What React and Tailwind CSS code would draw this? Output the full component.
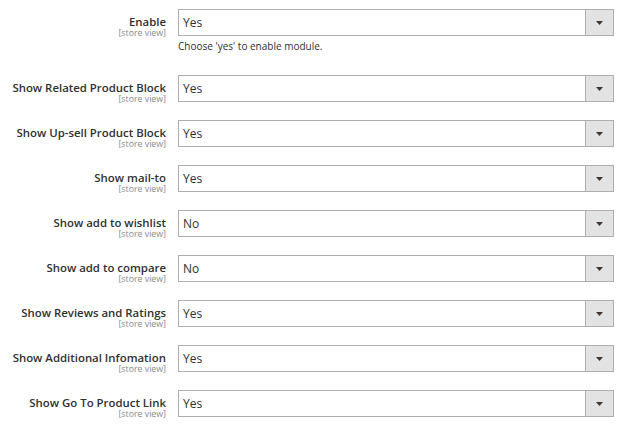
const rows = [
  { label: "Enable", value: "Yes", note: "Choose 'yes' to enable module." },
  { label: "Show Related Product Block", value: "Yes" },
  { label: "Show Up-sell Product Block", value: "Yes" },
  { label: "Show mail-to", value: "Yes" },
  { label: "Show add to wishlist", value: "No" },
  { label: "Show add to compare", value: "No" },
  { label: "Show Reviews and Ratings", value: "Yes" },
  { label: "Show Additional Infomation", value: "Yes" },
  { label: "Show Go To Product Link", value: "Yes" },
];

function Select({ value }) {
  return (
    <div className="flex h-[27px] border border-[#adadad] bg-white">
      <div className="flex flex-1 items-center pl-[4px] text-[12px] text-[#303030]">
        {value}
      </div>
      <div className="flex w-[28px] items-center justify-center border-l border-[#adadad] bg-[#e3e3e3]">
        <svg width="7" height="4" viewBox="0 0 7 4">
          <path d="M0 0h7L3.5 4z" fill="#41362f" />
        </svg>
      </div>
    </div>
  );
}

export default function App() {
  return (
    <div
      className="h-[426px] w-[624px] overflow-hidden bg-white pr-[10px] pt-[9px]"
      style={{ fontFamily: '"Open Sans", "Liberation Sans", sans-serif' }}
    >
      {rows.map((r) => (
        <div
          key={r.label}
          className={r.note ? "grid h-[48px] grid-cols-[166px_1fr] gap-x-[12px] mb-[18px]" : "grid h-[27px] grid-cols-[166px_1fr] gap-x-[12px] mb-[18px]"}
        >
          <div className="pt-[6px] text-right">
            <div className="text-[11.4px] leading-[13px] font-semibold text-[#303030]">{r.label}</div>
            <div className="text-[8.8px] leading-[10px] text-[#8a8a8a]">[store view]</div>
          </div>
          <div>
            <Select value={r.value} />
            {r.note && (
              <div className="mt-[4px] text-[10px] leading-[13px] text-[#303030]">{r.note}</div>
            )}
          </div>
        </div>
      ))}
    </div>
  );
}
